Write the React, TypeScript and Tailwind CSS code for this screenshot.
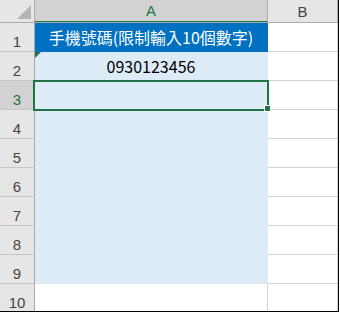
import React from 'react';

const rows = [1, 2, 3, 4, 5, 6, 7, 8, 9, 10];

function cellA(n: number) {
  if (n === 1) return 'bg-[#0070c0] border-[#0070c0] text-white';
  if (n <= 9) return 'bg-[#ddebf7] border-[#ddebf7] text-black';
  return 'bg-white border-[#d4d4d4]';
}

export default function App() {
  return (
    <div className="w-[340px] h-[313px] bg-white">
      <div className="relative w-[339px] h-[312px] border-r border-b border-black overflow-hidden">
        <div className="grid grid-cols-[35px_233px_70px] grid-rows-[23px_repeat(10,29px)] font-['Liberation_Sans',sans-serif]">
          {/* header row */}
          <div className="relative bg-[#e6e6e6] border-r border-b border-[#ababab]">
            <svg className="absolute left-[17px] top-[5px]" width="14" height="14" viewBox="0 0 14 14">
              <polygon points="14,0 14,14 0,14" fill="#b4b4b4" />
            </svg>
          </div>
          <div className="bg-[#d2d2d2] border-r border-b border-[#ababab]">
            <div className="h-full border-b border-[#217346] flex items-center justify-center text-[15px] leading-none text-[#217346]">A</div>
          </div>
          <div className="bg-[#e6e6e6] border-r border-b border-[#ababab] flex items-center justify-center text-[15px] leading-none text-[#444]">
            B
          </div>

          {rows.map((n) => (
            <React.Fragment key={n}>
              <div
                className={`${n === 3 ? 'bg-[#d2d2d2] text-[#217346]' : 'bg-[#e6e6e6] text-[#444]'} border-r border-b border-r-[#ababab] border-b-[#c6c6c6] flex items-end justify-center pb-px text-[15px] leading-[17px]`}
              >
                {n}
              </div>
              <div
                className={`${cellA(n)} border-r border-b flex items-center justify-center text-[16px] font-['Noto_Sans_CJK_TC','Noto_Sans_CJK_SC',sans-serif]`}
              >
                {n === 1 && '手機號碼(限制輸入10個數字)'}
                {n === 2 && '0930123456'}
              </div>
              <div className="bg-white border-r border-b border-[#d4d4d4]" />
            </React.Fragment>
          ))}
        </div>

        {/* number-stored-as-text marker in A2 */}
        <svg className="absolute left-[35px] top-[52px]" width="6" height="6" viewBox="0 0 6 6">
          <polygon points="0,0 6,0 0,6" fill="#217346" />
        </svg>

        {/* active cell A3 */}
        <div className="absolute left-[33px] top-[80px] w-[236px] h-[31px] border-2 border-[#217346]" />
        <div className="absolute left-[264px] top-[105px] w-[7px] h-[7px] bg-[#217346] border border-white" />
      </div>
    </div>
  );
}
